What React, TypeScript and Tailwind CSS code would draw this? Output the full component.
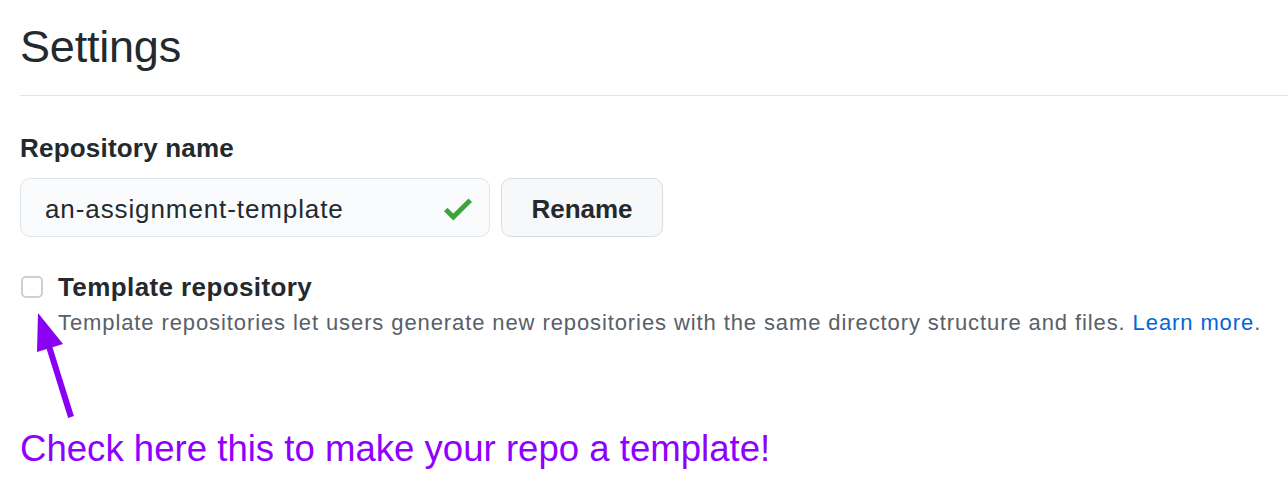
import { useState } from 'react'

function CheckIcon() {
  return (
    <svg width="28" height="23" viewBox="0 3.5 12 9.5" className="shrink-0" fill="#3fa33b">
      <path d="M12 5l-8 8-4-4 1.5-1.5L4 10l6.5-6.5L12 5z" />
    </svg>
  )
}

function Arrow() {
  return (
    <svg className="absolute left-0 top-0 pointer-events-none" width="120" height="440" viewBox="0 0 120 440">
      <line x1="71" y1="417" x2="47" y2="340" stroke="#8a00f0" strokeWidth="6" strokeLinecap="butt" />
      <polygon points="38,313 37,352 63,344" fill="#8a00f0" />
    </svg>
  )
}

export default function App() {
  const [name, setName] = useState('an-assignment-template')
  const [isTemplate, setIsTemplate] = useState(false)

  return (
    <div className="relative w-[1288px] h-[496px] overflow-hidden bg-white pl-5 font-['Liberation_Sans',Arial,sans-serif] text-[#24292e]">
      {/* Header */}
      <div className="pt-[19px] pb-[20px] border-b border-[#e1e4e8]">
        <h2 className="text-[45px] leading-[56px] font-normal tracking-[-0.2px]">Settings</h2>
      </div>

      {/* Repository name */}
      <div className="mt-9">
        <label className="block text-[26px] leading-[32px] font-bold tracking-[0.2px]">Repository name</label>
        <div className="mt-[14px] flex gap-[11px]">
          <div className="flex h-[59px] w-[470px] items-center rounded-[10px] border border-[#e1e4e8] bg-[#fafbfc] pl-[24px] pr-[17px] pt-[3px]">
            <input
              value={name}
              onChange={(e) => setName(e.target.value)}
              className="min-w-0 flex-1 bg-transparent text-[26px] tracking-[0.9px] outline-none"
            />
            <CheckIcon />
          </div>
          <button className="h-[59px] w-[162px] rounded-[10px] border border-[#d9dce0] bg-[#f7f8fa] pt-[3px] text-[26px] font-bold">
            Rename
          </button>
        </div>
      </div>

      {/* Template checkbox */}
      <div className="mt-[34px] flex items-start">
        <input
          type="checkbox"
          checked={isTemplate}
          onChange={(e) => setIsTemplate(e.target.checked)}
          className="ml-px mt-[5px] h-[22px] w-[22px] shrink-0 appearance-none rounded-[5px] border-2 border-[#cfcfcf] bg-white checked:bg-[#0366d6]"
        />
        <div className="ml-[15px]">
          <div className="text-[26px] leading-[32px] font-bold tracking-[0.4px]">Template repository</div>
          <p className="mt-[6px] text-[22px] leading-[28px] tracking-[0.9px] text-[#586069]">
            Template repositories let users generate new repositories with the same directory structure and files.{' '}
            <a href="#" className="text-[#0366d6]">Learn more</a>.
          </p>
        </div>
      </div>

      {/* Annotation */}
      <p className="mt-[90px] text-[36.6px] leading-[44px] text-[#8f00ff]">Check here this to make your repo a template!</p>
      <Arrow />
    </div>
  )
}
